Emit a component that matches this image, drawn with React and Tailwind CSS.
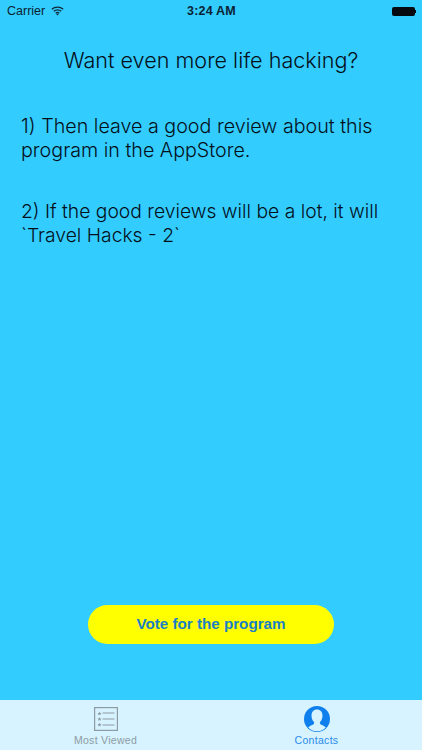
import React from 'react';

const WifiIcon = () => (
  <svg width="13" height="10" viewBox="0 0 13 10" fill="none" stroke="#0f2a3a" strokeWidth="1.3">
    <path d="M0.8 3.3C4 0.4 9 0.4 12.2 3.3" />
    <path d="M2.8 5.3C4.9 3.5 8.1 3.5 10.2 5.3" />
    <path d="M4.7 7.2C5.7 6.4 7.3 6.4 8.3 7.2" />
    <path d="M6.5 9.6L5.3 8.3C6 7.8 7 7.8 7.7 8.3Z" fill="#0f2a3a" stroke="none" />
  </svg>
);

const STAR = 'M5 5.2l.6 1.3 1.4.1-1 .9.3 1.4-1.3-.7-1.3.7.3-1.4-1-.9 1.4-.1z';

const ListIcon = () => (
  <svg width="24" height="24" viewBox="0 0 24 24" fill="none" stroke="#8e9ba3" strokeWidth="1.2">
    <rect x="0.6" y="0.6" width="22.8" height="22.8" />
    <path d={STAR} transform="translate(0.5 -0.6)" fill="#8e9ba3" stroke="none" />
    <path d={STAR} transform="translate(0.5 4.9)" fill="#8e9ba3" stroke="none" />
    <path d={STAR} transform="translate(0.5 10.6)" fill="#8e9ba3" stroke="none" />
    <path d="M8.5 6h12M8.5 12h12M8.5 18h12" />
  </svg>
);

const ContactIcon = () => (
  <svg width="26" height="26" viewBox="0 0 26 26">
    <circle cx="13" cy="13" r="13" fill="#0f7fee" />
    <path d="M13 3.5c-3.400 0-5.500 2.600-5.500 6 0 2.600 1 5 2.300 6.300.5.600.4 1.900-.3 2.500-1.300 1-3.900 1.500-5.300 3.300 2 2.400 5 3.600 8.800 3.600s6.800-1.200 8.800-3.600c-1.400-1.800-4-2.300-5.300-3.300-.7-.6-.8-1.900-.3-2.500C17.500 14.500 18.500 12.100 18.500 9.500c0-3.400-2.100-6-5.500-6z" fill="#d6f3ff" />
  </svg>
);

export default function App() {
  return (
    <div className='flex h-[750px] w-[422px] flex-col overflow-hidden bg-[#33ccff] font-["Liberation_Sans",sans-serif] text-[#0b2233]'>
      {/* Status bar */}
      <div className="flex h-[22px] items-center justify-between pr-[6px] pl-[7px] text-[12.5px]">
        <div className="flex flex-1 items-center gap-[6px]">
          <span>Carrier</span>
          <WifiIcon />
        </div>
        <span className="font-bold tracking-[0.2px]">3:24 AM</span>
        <div className="flex flex-1 justify-end">
          <div className="flex items-center">
            <div className="h-[9px] w-[23px] rounded-[2px] bg-[#050a10]" />
            <div className="h-[3px] w-[1px] bg-[#050a10]" />
          </div>
        </div>
      </div>

      {/* Message */}
      <div className='font-["Inter",sans-serif] font-light text-[#03101a]'>
        <h1 className="mt-[24px] text-center text-[21.6px] leading-[28px] font-light">Want even more life hacking?</h1>
        <p className="mt-[40px] px-[21px] text-[19.7px] leading-[24px]">
          1) Then leave a good review about this program in the AppStore.
        </p>
        <p className="mt-[37px] px-[21px] text-[19.3px] leading-[24px]">
          2) If the good reviews will be a lot, it will `Travel Hacks - 2`
        </p>
      </div>

      <div className="flex-1" />

      {/* Vote button */}
      <div className="flex justify-center pb-[56px]">
        <button className="h-[39px] w-[246px] rounded-full bg-[#ffff00] text-[15.2px] font-bold text-[#1a7fc4]">
          Vote for the program
        </button>
      </div>

      {/* Tab bar */}
      <div className="grid h-[50px] grid-cols-2 bg-[#d6f3ff] text-[10.5px]">
        <div className="flex flex-col items-center pt-[7px] text-[#8e9ba3]">
          <ListIcon />
          <span className="mt-[3px] leading-[12px] tracking-[0.3px]">Most Viewed</span>
        </div>
        <div className="flex flex-col items-center pt-[6px] text-[#2b8aea]">
          <ContactIcon />
          <span className="mt-[2px] leading-[12px] tracking-[0.3px]">Contacts</span>
        </div>
      </div>
    </div>
  );
}
